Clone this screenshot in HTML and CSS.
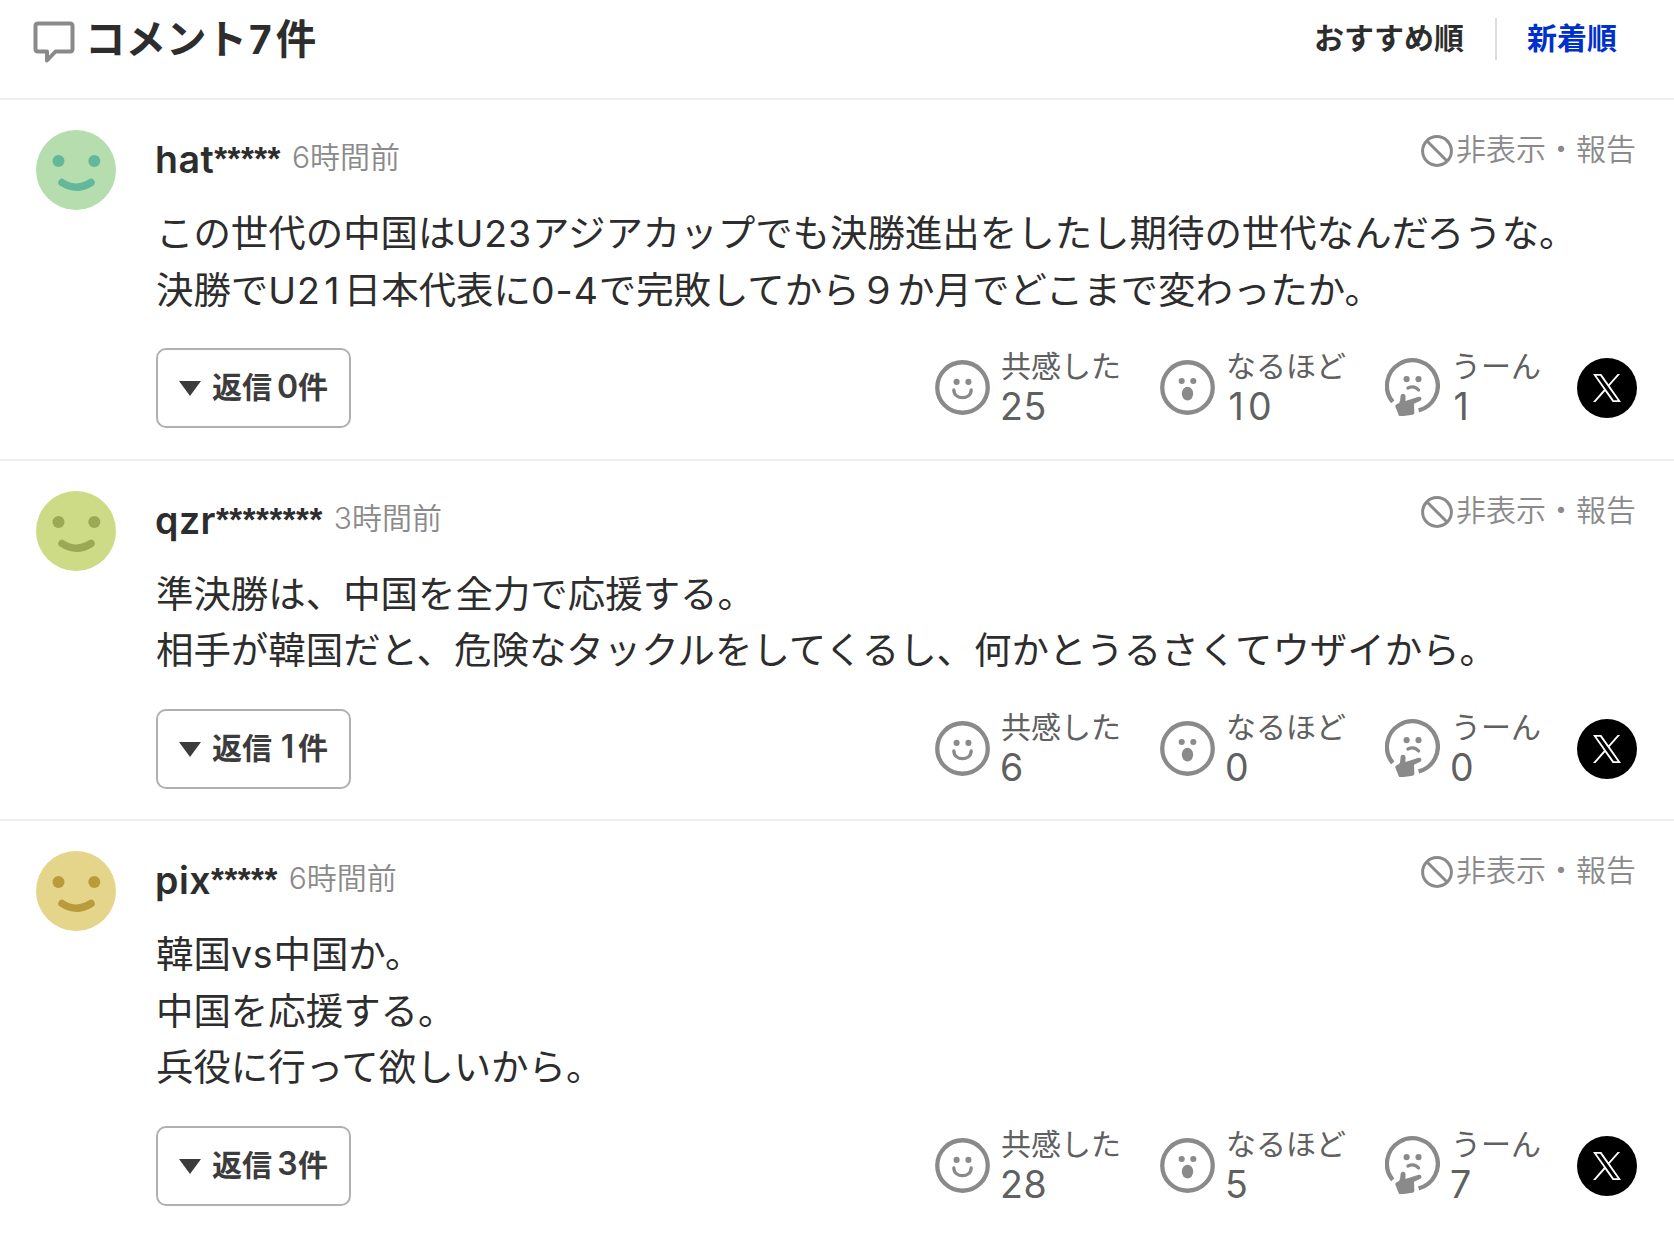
FILE: index.html
```
<!DOCTYPE html>
<html lang="ja">
<head>
    <meta charset="UTF-8">
    <title>コメント</title>
    <link rel="stylesheet" href="styles.css">
</head>
<body>
    <svg class="sprite" xmlns="http://www.w3.org/2000/svg">
        <symbol id="face" viewBox="0 0 80 80">
            <circle cx="22.5" cy="31" r="6"/>
            <circle cx="58.3" cy="31" r="6"/>
            <path d="M26 52.5q14.3 9.5 29 0" fill="none" stroke="currentColor" stroke-width="7.5" stroke-linecap="round"/>
        </symbol>
        <symbol id="ban" viewBox="0 0 32 32">
            <g fill="none" stroke="currentColor" stroke-width="3">
                <circle cx="16" cy="16" r="14.4"/>
                <path d="M6 6l20 20"/>
            </g>
        </symbol>
        <symbol id="smile" viewBox="0 0 54 54">
            <circle cx="27" cy="27" r="24.8" fill="none" stroke="currentColor" stroke-width="4.2"/>
            <circle cx="21.2" cy="21.5" r="3"/>
            <circle cx="32.8" cy="21.5" r="3"/>
            <path d="M18.5 29.5c.5 10 16.5 10 17 0" fill="none" stroke="currentColor" stroke-width="3.3" stroke-linecap="round"/>
        </symbol>
        <symbol id="surprise" viewBox="0 0 54 54">
            <circle cx="27" cy="27" r="24.8" fill="none" stroke="currentColor" stroke-width="4.2"/>
            <circle cx="21.3" cy="20.6" r="3"/>
            <circle cx="32.7" cy="20.6" r="3"/>
            <ellipse cx="27" cy="33" rx="5.6" ry="6.8"/>
        </symbol>
        <symbol id="think" viewBox="0 0 54 57">
            <path d="M7.6 43.2A25 25 0 1 1 33 51.5" fill="none" stroke="currentColor" stroke-width="4.2"/>
            <circle cx="21.2" cy="20.8" r="3"/>
            <circle cx="32.9" cy="20.8" r="3"/>
            <path d="M22.5 29.5q6.5-3 10.5 2" fill="none" stroke="currentColor" stroke-width="3.2" stroke-linecap="round"/>
            <path d="M15.3 37q.5-2 2.6-1.8 2.3.3 2.3 2.6l-.2 4.4 13-4q2-.4 2.6 1.2.6 2-1.3 2.9l-5.8 2.6.3 8.8q0 1.7-1.7 2l-11.6 1.7q-1.6.2-2.1-1.4L10.2 48q-.5-2 1.3-2.5 3-.8 3.3-3.5z"/>
        </symbol>
        <symbol id="x-logo" viewBox="0 0 300 300">
            <path d="M178.57 127.15 290.27 0h-26.46l-97.03 110.38L89.34 0H0l117.13 166.93L0 300.25h26.46l102.4-116.59 81.8 116.59h89.34M36.01 19.54h40.65l187.13 262.13h-40.66"/>
        </symbol>
    </svg>

    <header class="comments-header">
        <h1 class="title">
            <svg class="title-icon" viewBox="0 0 42 42"><path d="M5 2.5h32q2.5 0 2.5 2.5v23q0 2.5-2.5 2.5H22.5l-8.500 9v-9H5q-2.5 0-2.5-2.5V5q0-2.5 2.5-2.5z" fill="none" stroke="currentColor" stroke-width="4" stroke-linejoin="round"/></svg>
            <span>コメント<span class="title-count">7</span>件</span>
        </h1>
        <nav class="sort">
            <a class="sort-item">おすすめ順</a>
            <a class="sort-item active">新着順</a>
        </nav>
    </header>

    <main>
        <article class="comment">
            <div class="avatar green"><svg><use href="#face"/></svg></div>
            <div class="comment-main">
                <div class="comment-head">
                    <div class="user"><span class="name">hat<span class="mask">*****</span></span><time class="time">6時間前</time></div>
                    <div class="report"><svg><use href="#ban"/></svg>非表示・報告</div>
                </div>
                <p class="text">この世代の中国は<span class="num">U23</span>アジアカップでも決勝進出をしたし期待の世代なんだろうな。<br>決勝で<span class="num">U2<span class="one">1</span></span>日本代表に<span class="num">0-4</span>で完敗してから９か月でどこまで変わったか。</p>
                <div class="comment-foot">
                    <button class="reply"><span class="arrow"></span>返信<span class="reply-count">0</span>件</button>
                    <div class="reactions">
                        <div class="reaction"><svg><use href="#smile"/></svg><div><div class="label">共感した</div><div class="count">25</div></div></div>
                        <div class="reaction"><svg><use href="#surprise"/></svg><div><div class="label">なるほど</div><div class="count"><span class="one">1</span>0</div></div></div>
                        <div class="reaction think"><svg><use href="#think"/></svg><div><div class="label">うーん</div><div class="count"><span class="one">1</span></div></div></div>
                        <div class="share"><svg><use href="#x-logo"/></svg></div>
                    </div>
                </div>
            </div>
        </article>

        <article class="comment">
            <div class="avatar lime"><svg><use href="#face"/></svg></div>
            <div class="comment-main">
                <div class="comment-head">
                    <div class="user"><span class="name">qzr<span class="mask">********</span></span><time class="time">3時間前</time></div>
                    <div class="report"><svg><use href="#ban"/></svg>非表示・報告</div>
                </div>
                <p class="text">準決勝は、中国を全力で応援する。<br>相手が韓国だと、危険なタックルをしてくるし、何かとうるさくてウザイから。</p>
                <div class="comment-foot">
                    <button class="reply"><span class="arrow"></span>返信<span class="reply-count">1</span>件</button>
                    <div class="reactions">
                        <div class="reaction"><svg><use href="#smile"/></svg><div><div class="label">共感した</div><div class="count">6</div></div></div>
                        <div class="reaction"><svg><use href="#surprise"/></svg><div><div class="label">なるほど</div><div class="count">0</div></div></div>
                        <div class="reaction think"><svg><use href="#think"/></svg><div><div class="label">うーん</div><div class="count">0</div></div></div>
                        <div class="share"><svg><use href="#x-logo"/></svg></div>
                    </div>
                </div>
            </div>
        </article>

        <article class="comment">
            <div class="avatar yellow"><svg><use href="#face"/></svg></div>
            <div class="comment-main">
                <div class="comment-head">
                    <div class="user"><span class="name">pix<span class="mask">*****</span></span><time class="time">6時間前</time></div>
                    <div class="report"><svg><use href="#ban"/></svg>非表示・報告</div>
                </div>
                <p class="text">韓国<span class="num">vs</span>中国か。<br>中国を応援する。<br>兵役に行って欲しいから。</p>
                <div class="comment-foot">
                    <button class="reply"><span class="arrow"></span>返信<span class="reply-count">3</span>件</button>
                    <div class="reactions">
                        <div class="reaction"><svg><use href="#smile"/></svg><div><div class="label">共感した</div><div class="count">28</div></div></div>
                        <div class="reaction"><svg><use href="#surprise"/></svg><div><div class="label">なるほど</div><div class="count">5</div></div></div>
                        <div class="reaction think"><svg><use href="#think"/></svg><div><div class="label">うーん</div><div class="count">7</div></div></div>
                        <div class="share"><svg><use href="#x-logo"/></svg></div>
                    </div>
                </div>
            </div>
        </article>
    </main>
</body>
</html>
```

FILE: styles.css
```
:root {
    --text: #2d2d2d;
    --text-sub: #606060;
    --gray: #8a8a8a;
    --line: #eeeeee;
    --link: #0030cc;
}

* {
    box-sizing: border-box;
}

body {
    margin: 0;
    background: #fff;
    color: var(--text);
    font-family: "Noto Sans CJK JP", sans-serif;
    font-size: 30px;
    overflow: hidden;
}

svg {
    display: block;
    flex-shrink: 0;
    fill: currentColor;
}

.sprite {
    display: none;
}

.comments-header {
    display: flex;
    justify-content: space-between;
    height: 100px;
    padding: 0 57px 0 33px;
    border-bottom: 2px solid var(--line);
}

.title {
    display: flex;
    gap: 10px;
    margin: 0;
    font-size: 40.5px;
    line-height: 73px;
}

.title-icon {
    width: 42px;
    height: 42px;
    margin-top: 21px;
    color: var(--gray);
}

.title-count {
    padding: 0 4px 0 2px;
    font-family: "Inter", sans-serif;
    font-size: 39px;
    line-height: 0;
}

.sort {
    display: flex;
    height: 42px;
    margin-top: 18px;
    line-height: 36px;
    font-weight: bold;
}

.sort-item.active {
    margin-left: 31px;
    padding-left: 30px;
    border-left: 2px solid #ddd;
    color: var(--link);
}

.comment {
    display: flex;
    gap: 40px;
    padding: 30px 37px 30.5px 36px;
    border-bottom: 2px solid var(--line);
}

.comment:last-child {
    border-bottom: none;
}

.avatar {
    flex-shrink: 0;
    width: 80px;
    height: 80px;
    border-radius: 50%;
}

.avatar svg {
    width: 80px;
    height: 80px;
}

.green {
    background: #b5ddae;
    color: #63b79b;
}

.lime {
    background: #cddb86;
    color: #9ba856;
}

.yellow {
    background: #e5d58b;
    color: #b99b3c;
}

.comment-main {
    flex: 1;
}

.comment-head {
    display: flex;
    justify-content: space-between;
    height: 73px;
    color: var(--gray);
}

.user {
    display: flex;
    gap: 11px;
    margin-left: -1px;
    line-height: 54px;
}

.name {
    color: var(--text);
    font-family: "Inter", sans-serif;
    font-size: 37.5px;
    font-weight: 600;
    line-height: 59px;
    letter-spacing: 0.5px;
}

.mask {
    font-family: "Liberation Sans", sans-serif;
    font-size: 33px;
    font-weight: bold;
    line-height: 0;
    vertical-align: 3px;
}

.time {
    font-family: "Inter", "Noto Sans CJK JP", sans-serif;
    font-weight: 350;
}

.report {
    display: flex;
    gap: 3px;
    margin-right: 1px;
    line-height: 35px;
    font-weight: 350;
}

.report svg {
    width: 32px;
    height: 32px;
    margin-top: 5px;
}

.text {
    margin: 0 0 32px;
    font-size: 37.45px;
    line-height: 56.5px;
    white-space: nowrap;
}

.num {
    font-family: "Inter", sans-serif;
    letter-spacing: 0.9px;
    line-height: 0;
}

.one {
    display: inline-block;
    width: 23px;
    text-align: center;
}

.comment-foot {
    display: flex;
    justify-content: space-between;
    height: 80px;
}

.reply {
    display: flex;
    align-items: center;
    width: 195px;
    height: 80px;
    padding: 0 0 6px 21px;
    border: 2px solid #b0b0b0;
    border-radius: 10px;
    background: #fff;
    color: #3c3c3c;
    font: bold 30px "Noto Sans CJK JP", sans-serif;
}

.arrow {
    margin: 7px 11px 0 0;
    border: 11.5px solid transparent;
    border-top: 15px solid #3c3c3c;
    border-bottom: none;
}

.reply-count {
    width: 26px;
    padding: 2px 0 0 5px;
    font-family: "Inter", sans-serif;
    font-size: 32px;
    font-weight: 600;
    text-align: center;
}

.reactions {
    display: flex;
    padding-top: 10px;
}

.reaction {
    display: flex;
    gap: 11.5px;
    width: 225px;
    color: var(--text-sub);
}

.reaction svg {
    width: 55px;
    height: 55px;
    margin-top: 2px;
    color: var(--gray);
}

.reaction.think {
    width: 192.5px;
}

.reaction.think svg {
    height: 58px;
    margin-top: 0;
}

.label {
    margin-top: -14px;
    line-height: 40px;
}

.count {
    margin-left: -1px;
    font-family: "Inter", sans-serif;
    font-size: 37.5px;
    letter-spacing: 0.6px;
    line-height: 46px;
}

.share {
    display: flex;
    align-items: center;
    justify-content: center;
    width: 60px;
    height: 60px;
    border-radius: 50%;
    background: #000;
    color: #fff;
}

.share svg {
    width: 28px;
    height: 30px;
}
```
